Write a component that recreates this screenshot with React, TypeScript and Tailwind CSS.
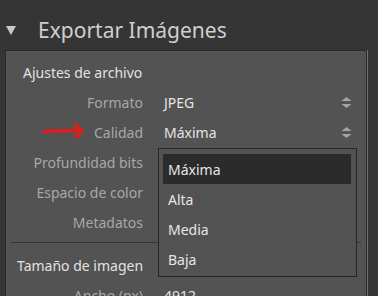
import React from 'react';

const font = { fontFamily: '"Noto Sans", "Open Sans", sans-serif' };

const Spinner: React.FC = () => (
  <svg width="11" height="11" viewBox="0 0 11 11" className="text-[#a3a3a3]">
    <path d="M5.5 0 L10.5 4 L0.5 4 Z" fill="currentColor" />
    <path d="M0.5 7 L10.5 7 L5.5 11 Z" fill="currentColor" />
  </svg>
);

interface RowProps {
  label: string;
  value?: string;
  spinner?: boolean;
}

const Row: React.FC<RowProps> = ({ label, value, spinner }) => (
  <div className="flex h-[30px] items-center">
    <div className="w-[137px] text-right text-[14px] text-[#a8a8a8]">{label}</div>
    <div className="ml-[21px] flex-1 text-[14px] text-[#e4e4e4]">{value}</div>
    {spinner && (
      <div className="mr-[14px] flex items-center">
        <Spinner />
      </div>
    )}
  </div>
);

const options = ['Máxima', 'Alta', 'Media', 'Baja'];

export default function App() {
  return (
    <div className="relative h-[296px] w-[378px] overflow-hidden bg-[#353535]" style={font}>
      {/* header */}
      <div className="flex h-[50px] items-center pt-[12px]">
        <svg width="10" height="9" viewBox="0 0 10 9" className="ml-[6px] mb-[1px]">
          <path d="M0 0 L10 0 L5 9 Z" fill="#c9c9c9" />
        </svg>
        <span className="ml-[22px] text-[21px] text-[#cfcfcf]">Exportar Imágenes</span>
      </div>

      {/* panel */}
      <div className="ml-[5px] h-[260px] w-[362px] border-t border-l border-r border-[#292929] bg-[#535353] pt-[7px] shadow-[1px_0_0_#727272]">
        <div className="flex h-[29px] items-center pl-[17px] text-[14px] text-[#e2e2e2]">
          Ajustes de archivo
        </div>
        <Row label="Formato" value="JPEG" spinner />
        <Row label="Calidad" value="Máxima" spinner />
        <Row label="Profundidad bits" />
        <Row label="Espacio de color" />
        <Row label="Metadatos" />
        <div className="mx-[5px] mt-[5px] h-px bg-[#353535]" />
        <div className="mt-[7px] flex h-[30px] items-center pl-[11px] text-[14px] text-[#e2e2e2]">
          Tamaño de imagen
        </div>
        <Row label="Ancho (px)" value="4912" />
      </div>

      {/* red arrow annotation */}
      <svg className="absolute left-[42px] top-[122px]" width="44" height="18" viewBox="0 0 44 18">
        <path d="M2 9.5 C14 8.5 26 8.8 38 8.6" stroke="#e31b1b" strokeWidth="3.4" fill="none" strokeLinecap="round" />
        <path d="M33 2.5 L40 8.6 L34 15" stroke="#e31b1b" strokeWidth="3.4" fill="none" strokeLinecap="round" strokeLinejoin="round" />
      </svg>

      {/* dropdown menu */}
      <div className="absolute left-[158px] top-[148px] w-[199px] border border-[#262626] bg-[#525252] pb-[2px] pl-[4px] pr-[5px] pt-[5px]">
        {options.map((o, i) => (
          <div
            key={o}
            className={`flex h-[30px] items-center pl-[5px] text-[14px] text-[#e6e6e6] ${i === 0 ? 'bg-[#2b2b2b]' : ''}`}
          >
            {o}
          </div>
        ))}
      </div>
    </div>
  );
}
